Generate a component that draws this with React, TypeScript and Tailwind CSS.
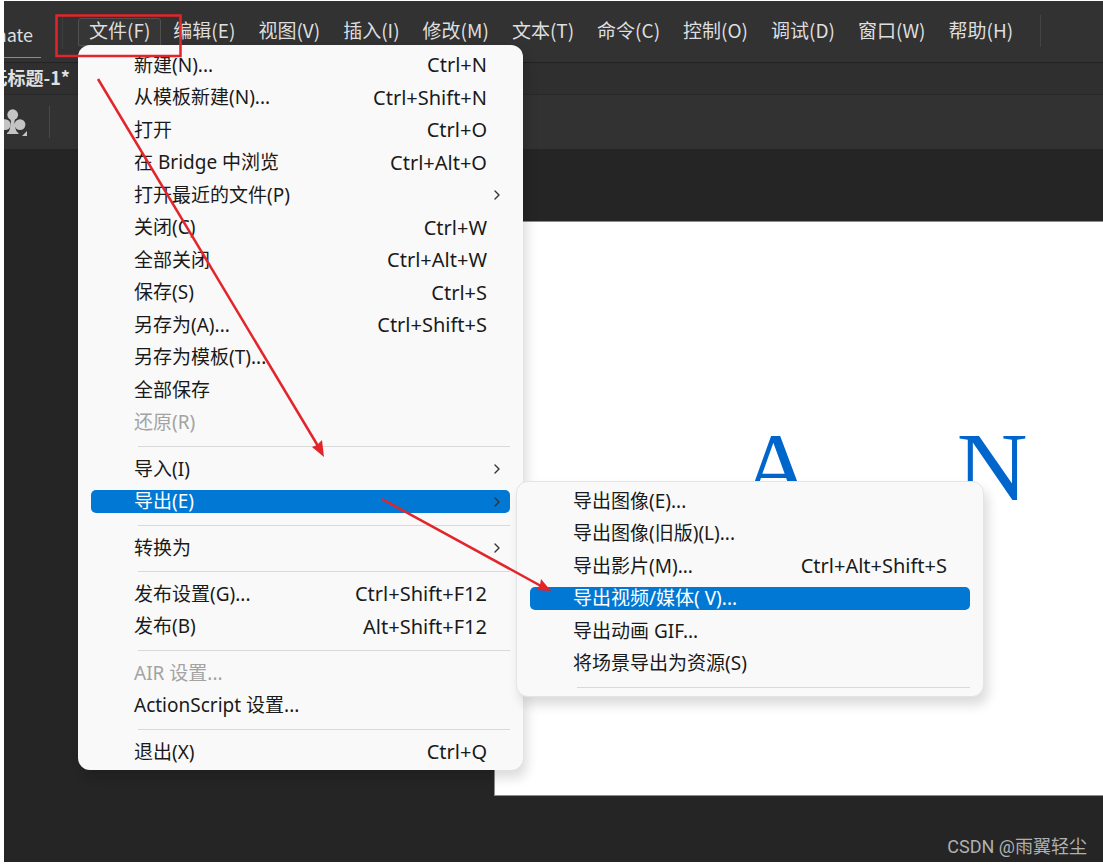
import { Fragment } from 'react';
import { ChevronRight } from 'lucide-react';
import { clsx } from 'clsx';

interface MenuEntry {
  label: string;
  shortcut?: string;
  disabled?: boolean;
  active?: boolean;
  submenu?: MenuEntry[][];
  arrow?: boolean;
}

const menuBar = [
  '文件(F)',
  '编辑(E)',
  '视图(V)',
  '插入(I)',
  '修改(M)',
  '文本(T)',
  '命令(C)',
  '控制(O)',
  '调试(D)',
  '窗口(W)',
  '帮助(H)',
];

const exportMenu: MenuEntry[][] = [
  [
    { label: '导出图像(E)...' },
    { label: '导出图像(旧版)(L)...' },
    { label: '导出影片(M)...', shortcut: 'Ctrl+Alt+Shift+S' },
    { label: '导出视频/媒体( V)...', active: true },
    { label: '导出动画 GIF...' },
    { label: '将场景导出为资源(S)' },
  ],
  [],
];

const fileMenu: MenuEntry[][] = [
  [
    { label: '新建(N)...', shortcut: 'Ctrl+N' },
    { label: '从模板新建(N)...', shortcut: 'Ctrl+Shift+N' },
    { label: '打开', shortcut: 'Ctrl+O' },
    { label: '在 Bridge 中浏览', shortcut: 'Ctrl+Alt+O' },
    { label: '打开最近的文件(P)', arrow: true },
    { label: '关闭(C)', shortcut: 'Ctrl+W' },
    { label: '全部关闭', shortcut: 'Ctrl+Alt+W' },
    { label: '保存(S)', shortcut: 'Ctrl+S' },
    { label: '另存为(A)...', shortcut: 'Ctrl+Shift+S' },
    { label: '另存为模板(T)...' },
    { label: '全部保存' },
    { label: '还原(R)', disabled: true },
  ],
  [
    { label: '导入(I)', arrow: true },
    { label: '导出(E)', arrow: true, active: true, submenu: exportMenu },
  ],
  [{ label: '转换为', arrow: true }],
  [
    { label: '发布设置(G)...', shortcut: 'Ctrl+Shift+F12' },
    { label: '发布(B)', shortcut: 'Alt+Shift+F12' },
  ],
  [
    { label: 'AIR 设置...', disabled: true },
    { label: 'ActionScript 设置...' },
  ],
  [{ label: '退出(X)', shortcut: 'Ctrl+Q' }],
];

function MenuItem({ item }: { item: MenuEntry }) {
  return (
    <li className="relative flex items-center odd:h-8 even:h-[33px]">
      <button
        type="button"
        disabled={item.disabled}
        className={clsx(
          'flex h-[23px] w-full items-center rounded-[5px] pr-[5px] pl-[43px] leading-none',
          item.active && 'bg-[#0078d4] text-white',
          item.disabled && 'text-[#a3a3a3]'
        )}
      >
        <span className="whitespace-nowrap">{item.label}</span>
        {item.shortcut && (
          <span className="mr-[18px] ml-auto text-[20px] whitespace-nowrap">
            {item.shortcut}
          </span>
        )}
        {item.arrow && (
          <ChevronRight
            className="ml-auto h-4 w-4 text-[#333333]"
            strokeWidth={2}
          />
        )}
      </button>
      {item.submenu && (
        <Menu
          groups={item.submenu}
          className="-top-1 left-[425px] z-10 w-[468px] border border-[#e4e4e4] pt-[3px] pb-[2px]"
        />
      )}
    </li>
  );
}

function Menu({
  groups,
  className,
}: {
  groups: MenuEntry[][];
  className?: string;
}) {
  return (
    <div
      className={clsx(
        'absolute rounded-xl bg-[#f9f9f9] px-[13px] font-["Noto_Sans","Noto_Sans_CJK_SC",sans-serif] text-[19px] text-[#1a1a1a] shadow-[4px_8px_12px_rgba(0,0,0,0.14)]',
        className
      )}
    >
      {groups.map((group, i) => (
        <Fragment key={i}>
          {i > 0 && (
            <div className="flex h-[14px] items-center pl-[47px]">
              <hr className="w-full border-[#d9d9d9]" />
            </div>
          )}
          <ul>
            {group.map((item) => (
              <MenuItem key={item.label} item={item} />
            ))}
          </ul>
        </Fragment>
      ))}
    </div>
  );
}

function ClubIcon() {
  return (
    <svg width="24" height="28" viewBox="0 0 24 28" aria-hidden="true">
      <g fill="#c4c4c4">
        <circle cx="8.7" cy="6.7" r="5.4" />
        <circle cx="1.2" cy="16.6" r="5.4" />
        <circle cx="16" cy="16.6" r="5.4" />
        <path d="M6 9h5.4l-1 5 .6 3c.2 4 1.400 7 3.500 8v1H3v-1c2-1 3.200-4 3.400-8l.6-3z" />
        <path d="M23 23v5h-5z" />
      </g>
    </svg>
  );
}

// Red marker lines that walk through File > Export > Export Video/Media
function Annotations() {
  return (
    <svg
      className="pointer-events-none absolute top-0 left-0 z-20"
      width="600"
      height="620"
      viewBox="0 0 600 620"
      aria-hidden="true"
    >
      <g stroke="#e3242b" fill="none" strokeWidth="2.5">
        <rect x="56.5" y="15.5" width="124" height="40.500" />
        <path d="M98 79L318 446" />
        <path d="M382 499L541 586" />
      </g>
      <g fill="#e3242b">
        <path d="M324 457L312 447L317 445L322 440Z" />
        <path d="M551 591L536 590L540 585L541 579Z" />
      </g>
    </svg>
  );
}

export default function App() {
  return (
    <div className='relative min-h-screen overflow-hidden bg-white pt-px pb-[5px] pl-1 font-["Noto_Sans_CJK_SC",sans-serif]'>
      <div className="bg-[#252525]">
        <header className="flex h-[62px] items-start border-b border-[#222222] bg-[#323232] text-[19px] text-[#dedede]">
          <div className="flex h-[57px] w-[37px] shrink-0 items-center justify-end overflow-hidden border-b border-[#8a8a8a] pt-[10px] pr-2 text-[18px]">
            <span>nate</span>
          </div>
          <div className="mt-4 ml-[21px] h-8 w-px shrink-0 bg-[#3e3e3e]" />
          <nav className="relative mt-[17px] ml-[15px] flex gap-px">
            {menuBar.map((label, i) => (
              <button
                key={label}
                type="button"
                className={clsx(
                  'h-7 rounded-t-[3px] border px-[10px] pb-[5px] leading-none whitespace-nowrap',
                  i === 0 ? 'border-[#505050] bg-[#363636]' : 'border-transparent'
                )}
              >
                {label}
              </button>
            ))}
            <Menu
              groups={fileMenu}
              className="top-[27px] left-0 z-10 w-[445px] pt-1 pb-[2px]"
            />
          </nav>
          <div className="mt-[14px] ml-4 h-8 w-px shrink-0 bg-[#444444]" />
        </header>

        <div className="flex h-8 items-start border-b border-[#292929] bg-[#2f2f2f]">
          <div className="flex w-[66px] justify-end overflow-hidden text-[18px] leading-7 font-bold whitespace-nowrap text-[#e0e0e0]">
            无标题-1*
          </div>
        </div>

        <div className="flex h-[54px] items-center bg-[#323232]">
          <ClubIcon />
          <div className="ml-[21px] h-8 w-px bg-[#484848]" />
        </div>

        <main className="pt-[72px] pl-[490px]">
          <div className='flex h-[575px] gap-[145px] border border-r-0 border-[#8c8c8c] bg-white pt-[196px] pl-[246px] font-["Liberation_Serif",serif] text-[98px] leading-none text-[#0066cc]'>
            <span>A</span>
            <span>N</span>
          </div>
        </main>

        <footer className='flex h-[66px] items-end justify-end pr-4 font-["Roboto","Noto_Sans_CJK_SC",sans-serif] text-[18px] leading-[30px] text-[#b0b0b0]'>
          CSDN @雨翼轻尘
        </footer>
      </div>
      <Annotations />
    </div>
  );
}
